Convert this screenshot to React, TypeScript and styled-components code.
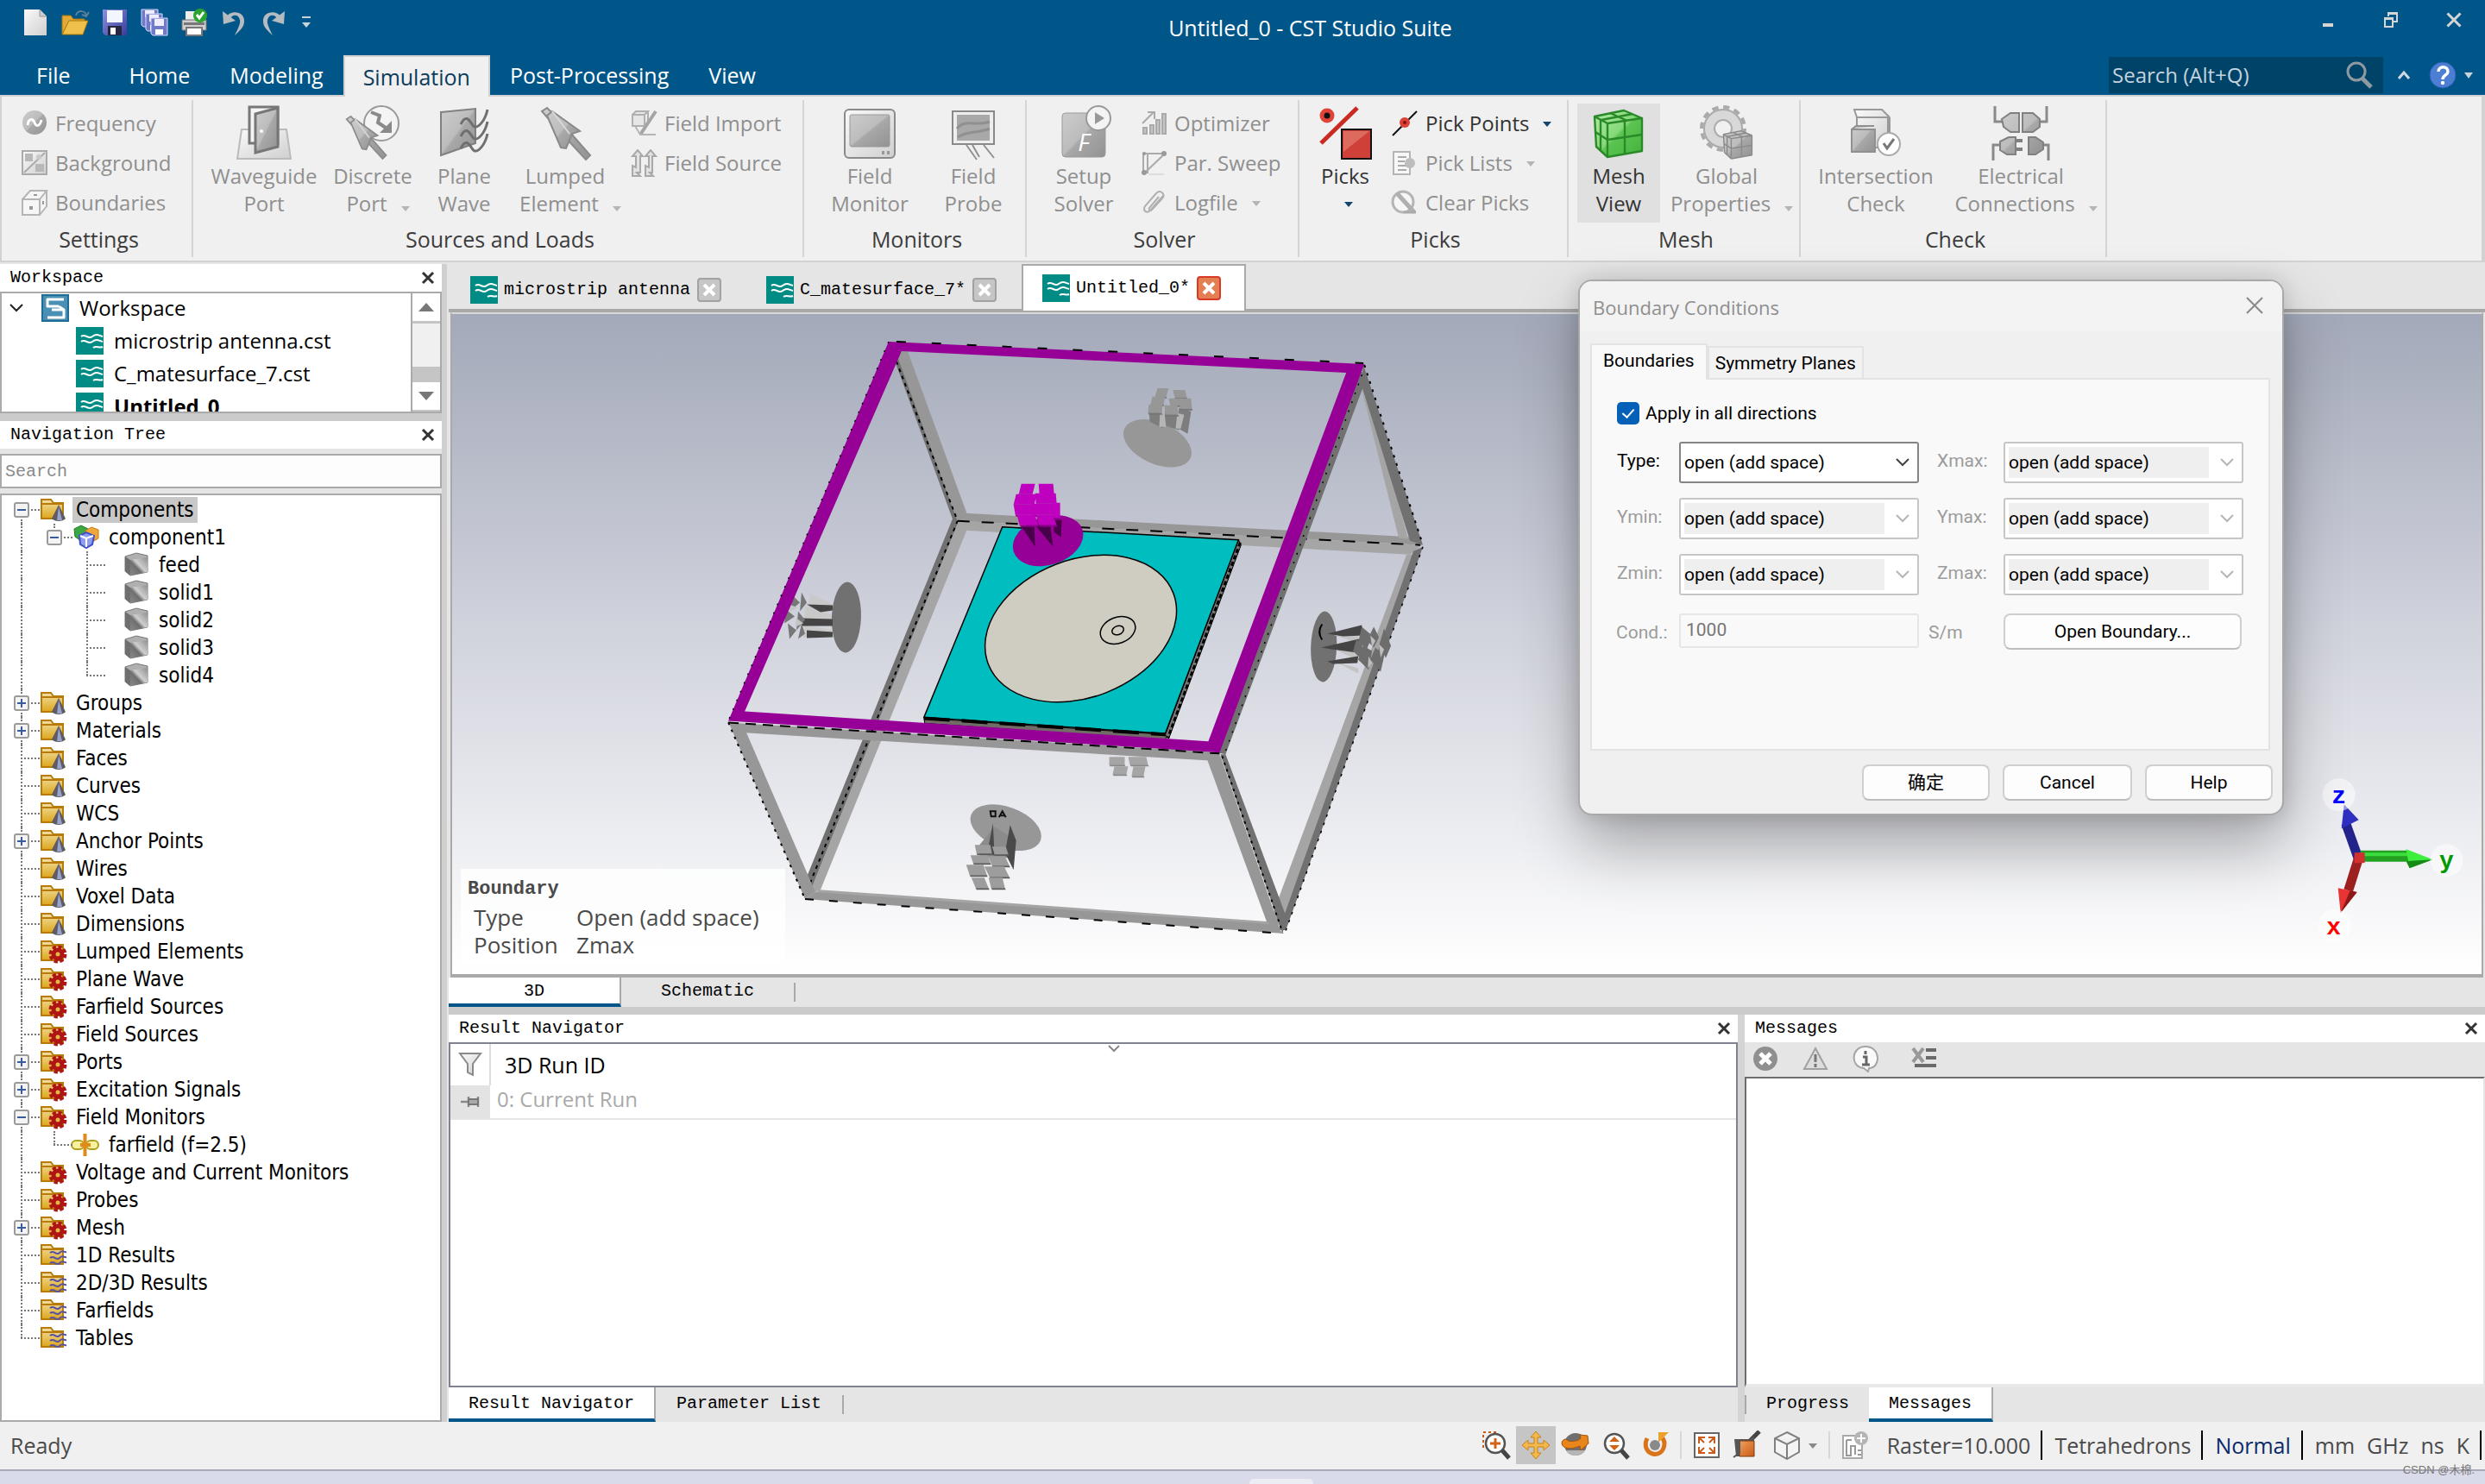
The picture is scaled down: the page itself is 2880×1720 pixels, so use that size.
import React from 'react';
import styled, { createGlobalStyle, css } from 'styled-components';

const ui = '"Open Sans", "Noto Sans", sans-serif';
const mono = '"Liberation Mono", "Noto Sans CJK SC", monospace';
const tahoma = '"DejaVu Sans Condensed", "Open Sans", sans-serif';
const dlg = 'Roboto, "Noto Sans CJK SC", sans-serif';

const Global = createGlobalStyle`
  * { box-sizing: border-box; }
  body { margin: 0; background: #e5e5e5; font: 24px/32px ${ui}; color: #000; }
  button, input, select { font: inherit; color: inherit; margin: 0; padding: 0; border: 0; background: none; border-radius: 0; outline: 0; }
  ul { list-style: none; margin: 0; padding: 0; }
  svg { display: block; flex: none; }
`;

/* ---------- shell ---------- */
const Shell = styled.div`display: flex; flex-direction: column; min-height: 100vh; position: relative; overflow: hidden;`;
const TitleBar = styled.header`display: flex; align-items: center; height: 64px; background: #005688; color: #fff;`;
const QuickAccess = styled.div`display: flex; align-items: center; padding: 0 6px 12px 18px;`;
const QuickButton = styled.button<{ $w?: number }>`width: ${p => p.$w ?? 46}px; display: flex; justify-content: center;`;
const WindowTitle = styled.h1`flex: 1; margin: 0; text-align: center; font-size: 25px; line-height: 32px; font-weight: 400;`;
const WindowButtons = styled.div`display: flex; align-items: center; padding-bottom: 18px; button { width: 73px; display: flex; justify-content: center; }`;
const TabBar = styled.nav`display: flex; height: 46px; background: #005688; color: #fff; padding-left: 19px;`;
const RibbonTab = styled.button<{ $on?: boolean; $gap?: boolean }>`
  && { padding: 0 23px; margin-right: ${p => (p.$gap ? 22 : 0)}px; font-size: 25px;
  ${p => p.$on && css`background: #f0f0f0; color: #0b3c5c; border: 2px solid #d2d2d2; border-bottom: 0; padding: 0 21px; margin-bottom: -2px; z-index: 1;`} }
`;
const TabTools = styled.div`margin-left: auto; display: flex; align-items: center; padding-right: 10px;`;
const SearchBox = styled.label`
  display: flex; align-items: center; width: 318px; height: 42px; background: #004368; padding: 0 12px 0 4px;
  input { flex: 1; min-width: 0; color: #c4d4df; } input::placeholder { color: #c4d4df; opacity: 1; }
`;
const ToolButton = styled.button<{ $w: number }>`width: ${p => p.$w}px; display: flex; justify-content: center;`;

/* ---------- ribbon ---------- */
const Ribbon = styled.div`display: flex; height: 194px; background: #f0f0f0; border: 2px solid #d2d2d2; border-right-width: 4px;`;
const Group = styled.section<{ $w: number }>`
  display: flex; flex-direction: column; width: ${p => p.$w}px; margin: 4px 0; padding-top: 4px; border-right: 2px solid #d5d5d5;
  h2 { margin: 0; padding-left: 5px; font-size: 25px; font-weight: 400; line-height: 38px; text-align: center; color: #3c3c3c; }
`;
const GroupBody = styled.div<{ $pad?: number }>`display: flex; height: 138px; padding-left: ${p => p.$pad ?? 8}px;`;
const Big = styled.button<{ $w: number; $live?: boolean; $on?: boolean }>`
  && { width: ${p => p.$w}px; display: flex; flex-direction: column; align-items: center; padding-bottom: 6px; white-space: nowrap;
  color: ${p => (p.$live ? '#333' : '#8f8f8f')}; background: ${p => (p.$on ? '#e0e0e0' : 'transparent')}; }
  > span { display: flex; height: 32px; align-items: center; }
`;
const BigIcon = styled.i`height: 68px; display: flex; align-items: center;`;
const Smalls = styled.div<{ $ml?: number }>`display: flex; flex-direction: column; margin-left: ${p => p.$ml ?? 0}px;`;
const Small = styled.button<{ $live?: boolean }>`
  && { height: 46px; display: flex; align-items: center; gap: 8px; white-space: nowrap; text-align: left; color: ${p => (p.$live ? '#333' : '#8f8f8f')}; }
`;
const CaretMark = styled.i<{ $c?: string; $big?: boolean }>`
  border: 5px solid transparent; border-top: 6px solid ${p => p.$c ?? '#b5b5b5'}; border-bottom: 0;
  margin: ${p => (p.$big ? '12px -12px 0 16px' : '2px 0 0 8px')};
`;

/* ---------- docking area ---------- */
const Main = styled.main`flex: 1; display: flex; padding-top: 2px; min-height: 0;`;
const LeftDock = styled.aside`width: 518px; display: flex; flex-direction: column; border-right: 6px solid #d0d0d0; background: #e5e5e5;`;
const Center = styled.div`flex: 1; min-width: 0; display: flex; flex-direction: column; padding-left: 2px;`;
const PanelHead = styled.div`
  display: flex; justify-content: space-between; align-items: center; height: 32px; padding: 0 8px 0 12px; background: #fff;
  h2 { margin: 0; font: 400 20px/32px ${mono}; }
`;
const WorkspaceBox = styled.div`display: flex; height: 141px; border: 2px solid #aaa; background: #fff; overflow: hidden; ul { flex: 1; margin-top: -2px; }`;
const WsRow = styled.li<{ $lvl: number; $bold?: boolean }>`
  height: 38px; display: flex; align-items: center; gap: 12px; white-space: nowrap;
  padding-left: ${p => (p.$lvl ? 86 : 8)}px; font-weight: ${p => (p.$bold ? 700 : 400)};
  button { width: 26px; } 
`;
const ScrollBar = styled.div`width: 34px; border-left: 2px solid #aaa; display: flex; flex-direction: column; background: #c5c5c5; gap: 3px;`;
const ScrollPart = styled.button<{ $thumb?: boolean }>`
  && { height: 32px; display: flex; align-items: center; justify-content: center; background: ${p => (p.$thumb ? '#f0f0f0' : '#fff')};
  ${p => p.$thumb && css`height: 50px; margin-bottom: 15px;`} }
`;
const Splitter = styled.div`height: 9px; background: #cbcbcb; flex: none;`;
const TreeSearch = styled.input`
  && { margin: 6px 0; height: 40px; flex: none; border: 2px solid #aaa; background: #fdfdfd; padding: 0 4px; font: 20px ${mono}; }
  &::placeholder { color: #8a8a8a; opacity: 1; }
`;
const Tree = styled.ul`&& { flex: 1; border: 2px solid #aaa; background: #fff; padding-top: 1px; }`;
const TreeRow = styled.li`display: flex; align-items: center; height: 32px; padding-left: 4px; font: 24px/30px ${tahoma}; white-space: nowrap;`;
type G = 'start' | 'tee' | 'end' | 'line' | 'none';
const Guide = styled.span<{ $g: G }>`
  position: relative; width: 38px; height: 32px; flex: none; display: flex; align-items: center; justify-content: center;
  ${p => p.$g !== 'none' && css`&::before { content: ''; position: absolute; left: 18px; border-left: 2px dotted #777;
    top: ${p.$g === 'start' ? 16 : 0}px; bottom: ${p.$g === 'end' ? 16 : 0}px; }`}
  ${p => p.$g !== 'none' && p.$g !== 'line' && css`&::after { content: ''; position: absolute; left: 18px; right: -2px; top: 15px; border-top: 2px dotted #777; }`}
`;
const Expander = styled.button`
  && { position: relative; z-index: 1; width: 18px; height: 18px; border: 2px solid #9a9a9a; border-radius: 3px; background: #f4f4f4; display: grid; place-items: center; }
`;
const TreeIcon = styled.span<{ $w?: number }>`width: ${p => p.$w ?? 40}px; display: flex; justify-content: flex-end; padding-right: 6px; flex: none;`;
const TreeText = styled.span<{ $on?: boolean }>`padding: 0 4px; background: ${p => (p.$on ? '#c8c8c8' : 'transparent')};`;

const DocTabs = styled.div`display: flex; height: 56px; flex: none; border-bottom: 4px solid #a9a9a9; font: 20px/32px ${mono};`;
const DocTab = styled.div<{ $on?: boolean }>`
  display: flex; align-items: center; padding: 8px 27px 0 25px; white-space: nowrap;
  span { margin: 0 8px 0 7px; }
  ${p => p.$on && css`background: #fff; border: 2px solid #a9a9a9; border-bottom: 0; margin: 0 0 -2px 2px; padding: 0 27px 0 22px;`}
`;
const TabClose = styled.button<{ $red?: boolean }>`
  && { width: 28px; height: 28px; display: grid; place-items: center; border-radius: 4px; border: 2px solid ${p => (p.$red ? '#d83a28' : '#a2a2a2')}; background: ${p => (p.$red ? '#e37f52' : '#c6c6c6')}; }
`;
const Viewport = styled.div`
  flex: 1; position: relative; min-height: 0; margin: 0 2px; border: 2px solid #a9a9a9; border-top-color: #d8d8d8; border-bottom-width: 4px;
  background: linear-gradient(#a3a9b9, #d0d2dc 47%, #fff);
  > svg { position: absolute; inset: 0; width: 100%; height: 100%; }
`;
const InfoBox = styled.dl`
  position: absolute; left: 10px; bottom: 12px; width: 376px; margin: 0; padding: 8px 8px 6px 15px; background: rgba(255,255,255,.8); color: #4a4a4a; font-size: 26px;
  display: grid; grid-template-columns: 119px 1fr;
  dt, dd { margin: 0; line-height: 32px; }
  h3 { grid-column: 1 / 3; margin: 0 0 0 -7px; font: 700 22px/32px ${mono}; }
`;
const BottomTabs = styled.div<{ $h: number }>`display: flex; align-items: center; height: ${p => p.$h}px; flex: none; background: #e5e5e5; font: 20px/32px ${mono};`;
const BTab = styled.button<{ $w: number; $on?: boolean }>`
  && { width: ${p => p.$w}px; height: 100%; line-height: 28px; padding-bottom: 2px;
  ${p => p.$on && css`background: #fff; border: solid #a9a9a9; border-width: 0 2px 4px 0; border-bottom-color: #005688; padding: 2px 0 0;`} }
`;
const TabSep = styled.i`width: 2px; height: 22px; background: #a9a9a9;`;
const BottomDock = styled.div`display: flex; height: 472px; gap: 8px; flex: none; background: #d4d4d4;`;
const Panel = styled.section<{ $w?: number }>`display: flex; flex-direction: column; ${p => (p.$w ? css`width: ${p.$w}px; flex: none;` : css`flex: 1; min-width: 0;`)}`;
const ResultBody = styled.div`flex: 1; position: relative; border: 2px solid #80838f; background: #fff; > svg { position: absolute; left: 762px; top: 1px; }`;
const ResultTable = styled.table`
  width: 100%; border-collapse: collapse; 
  th, td { padding: 0; text-align: left; font-weight: 400; border-bottom: 2px solid #e5e5e5; }
  thead th { height: 48px; border-bottom: 0; font-size: 25px; } thead th + th { padding-left: 16px; border-left: 2px solid #ddd; }
  tbody td { height: 38px; color: #a9a9a9; padding: 0 0 6px 8px; } tbody td:first-child { background: #e3e3e3; width: 46px; padding: 0; }
  th:first-child svg, td:first-child svg { margin: auto; }
`;
const MessageTools = styled.div`display: flex; align-items: center; height: 40px; padding: 0 0 3px 8px; gap: 26px; background: #e5e5e5; button:last-child { margin-left: 10px; }`;
const MessageList = styled.div`flex: 1; background: #fff; border: 2px solid #6d6d6d; border-right-color: #e5e5e5; border-bottom: 4px solid #e8e8e8;`;

/* ---------- status bar ---------- */
const Status = styled.footer`display: flex; align-items: center; height: 57px; flex: none; background: #f0f0f0; border-bottom: 2px solid #a9aab8; color: #4a4a4a; padding: 0 4px 2px 12px; white-space: nowrap; font-size: 25px;`;
const StatusIcons = styled.div`display: flex; align-items: center; margin-left: auto;`;
const StatusButton = styled.button<{ $on?: boolean; $w?: number }>`
  && { width: ${p => p.$w ?? 46}px; height: 44px; display: flex; align-items: center; justify-content: center; background: ${p => (p.$on ? '#c5c5c5' : 'transparent')}; }
`;
const ThinSep = styled.i`width: 2px; height: 32px; background: #d8d8d8; margin: 0 6px;`;
const StatusText = styled.span<{ $blue?: boolean }>`padding: 0 12px 0 14px; border-right: 2px solid #000; line-height: 34px; color: ${p => (p.$blue ? '#0a2a6c' : 'inherit')}; display: flex; gap: 14px;`;
const Taskbar = styled.div`height: 15px; flex: none; background: #d9dbea; display: flex; justify-content: center; align-items: flex-end; padding-left: 90px; i { width: 74px; height: 6px; border-radius: 5px 5px 0 0; background: #ececf5; }`;
const Watermark = styled.small`position: absolute; right: 12px; bottom: 6px; font: 13px/20px "Liberation Sans", "Noto Sans CJK SC", sans-serif; color: #777;`;

/* ---------- dialog ---------- */
const Dialog = styled.form`
  position: absolute; right: 233px; top: 324px; width: 818px; border: 2px solid #a9a9a9; border-radius: 16px; background: #f0f0f0; z-index: 5;
  box-shadow: 0 36px 72px rgba(0,0,0,.3), 0 0 24px rgba(0,0,0,.14); font: 21px/28px ${dlg}; padding: 0 14px 15px 12px;
`;
const DialogHead = styled.div`
  display: flex; justify-content: space-between; align-items: center; height: 58px; margin: 0 -14px 14px -12px; padding: 2px 20px 0 15px; background: #f3f3f3; border-radius: 14px 14px 0 0; color: #8f8f8f;
  h2 { margin: 0; font: 400 22px/28px ${ui}; } button { margin-bottom: 4px; }
`;
const DialogTabs = styled.div`display: flex; align-items: flex-end; margin-bottom: -2px;`;
const DialogTab = styled.button<{ $on?: boolean }>`
  && { border: 2px solid #e3e3e3; border-bottom: 0; height: ${p => (p.$on ? 42 : 37)}px; padding: 0 ${p => (p.$on ? 13 : 7)}px; background: ${p => (p.$on ? '#f9f9f9' : '#f2f2f2')};
  ${p => (p.$on ? 'padding-bottom: 4px; position: relative;' : 'margin-bottom: 2px;')} }
`;
const DialogPane = styled.div`height: 432px; border: 2px solid #e3e3e3; background: #f9f9f9; padding: 25px 28px;`;
const CheckLabel = styled.label`display: flex; align-items: center; gap: 7px; margin: 0 0 19px 1px; height: 28px;`;
const Check = styled.input`
  && { appearance: none; width: 26px; height: 26px; border-radius: 5px; display: grid; place-items: center; background: #0560b8; }
  &::after { content: ''; width: 6px; height: 11px; border: solid #fff; border-width: 0 2px 2px 0; transform: rotate(42deg); margin-bottom: 4px; }
`;
const Fields = styled.div`display: grid; grid-template-columns: 73px 278px 98px 278px; row-gap: 17px; align-items: center;`;
const FieldLabel = styled.label<{ $off?: boolean; $right?: boolean }>`color: ${p => (p.$off ? '#9c9c9c' : '#000')}; padding: 0 0 4px ${p => (p.$right ? 21 : 1)}px;`;
const CondLabel = styled(FieldLabel)`padding: 6px 0 0 ${p => (p.$right ? 11 : 0)}px;`;
const SelectBox = styled.span<{ $off?: boolean }>`
  display: flex; align-items: center; height: 48px; border: 2px solid ${p => (p.$off ? '#c6c6c6' : '#858585')}; border-radius: 3px; background: #fff; padding: 4px 8px 4px 4px;
  select { flex: 1; min-width: 0; height: 100%; appearance: none; opacity: 1; color: #000; background: ${p => (p.$off ? '#efefef' : '#fff')}; margin-right: 12px; }
`;
const CondInput = styled.input`&& { height: 40px; width: 278px; border: 2px solid #e6e6e6; border-radius: 3px; background: #f9f9f9; padding: 0 6px 2px; color: #767676; margin-top: 2px; }`;
const DlgButton = styled.button<{ $w: number; $drop?: boolean }>`
  && { width: ${p => p.$w}px; height: 42px; margin-top: ${p => (p.$drop ? 4 : 0)}px; border: 2px solid #cfcfcf; border-bottom-color: #bdbdbd; border-radius: 8px; background: #fdfdfd; color: #000; }
`;
const DialogFoot = styled.div`display: flex; justify-content: flex-end; gap: 15px; padding-top: 16px; margin-right: -3px;`;

/* ---------- icons ---------- */
type Kids = { children?: React.ReactNode; w?: number; h?: number; vb?: string };
const Ico = ({ children, w = 32, h = 32, vb }: Kids) => (
  <svg width={w} height={h} viewBox={vb ?? `0 0 ${w} ${h}`} fill="none" aria-hidden="true">{children}</svg>
);
const DefsSvg = styled.svg`position: absolute;`;
const Defs = () => (
  <DefsSvg width="0" height="0" aria-hidden="true">
    <defs>
      <linearGradient id="gy" x2="1" y2="1"><stop stopColor="#cccccc" /><stop offset=".48" stopColor="#bcbcbc" /><stop offset=".52" stopColor="#a8a8a8" /><stop offset="1" stopColor="#929292" /></linearGradient>
      <linearGradient id="gl" x2="1" y2="1"><stop stopColor="#fafafa" /><stop offset="1" stopColor="#cfcfcf" /></linearGradient>
      <linearGradient id="fo" x2="0" y2="1"><stop stopColor="#f2dfa4" /><stop offset="1" stopColor="#dca61c" /></linearGradient>
      <linearGradient id="bl" x2="1" y2="1"><stop stopColor="#8b92dd" /><stop offset="1" stopColor="#3b3b9c" /></linearGradient>
      <linearGradient id="gn" x2="1" y2="1"><stop stopColor="#b4ecaa" /><stop offset=".48" stopColor="#84d878" /><stop offset=".52" stopColor="#5cc452" /><stop offset="1" stopColor="#44b23c" /></linearGradient>
      <linearGradient id="og" x2="1" y2="1"><stop stopColor="#f0a060" /><stop offset="1" stopColor="#c85a14" /></linearGradient>
      <linearGradient id="ok" x1="0" y1="1" x2="1" y2="0"><stop stopColor="#8a8a8a" /><stop offset=".4" stopColor="#6f6f6f" /><stop offset=".55" stopColor="#cfcfcf" /><stop offset="1" stopColor="#8d8d8d" /></linearGradient>
    </defs>
  </DefsSvg>
);
const X = ({ s = 16, c = '#333', t = 3 }) => <Ico w={s} h={s} vb="0 0 16 16"><path d="M2 2l12 12M14 2L2 14" stroke={c} strokeWidth={t} /></Ico>;
const Chev = ({ c = '#555' }) => <Ico w={18} h={12} vb="0 0 18 12"><path d="M2 2l7 7 7-7" stroke={c} strokeWidth="2" /></Ico>;

const IcoNew = () => <Ico><path d="M3 1h18l8 8v22H3z" fill="url(#gl)" /><path d="M21 1v8h8" fill="#ccc" stroke="#999" /></Ico>;
const IcoOpen = () => <Ico w={34}><path d="M2 29V8h10l3 4h13v5" fill="#e0a93a" stroke="#a87408" /><path d="M2 30l8-16h22l-6 16z" fill="#f0c14a" stroke="#a87408" /><path d="M18 8c2-7 11-6 12 0m3-4l-3 5-5-2" stroke="#5d7f98" strokeWidth="2" /></Ico>;
const IcoSave = () => <Ico><path d="M2 1h28v30H5l-3-3z" fill="url(#bl)" /><path d="M7 2h18v14H7z" fill="#f4f6ff" /><path d="M8 20h16v11H8z" fill="#26263f" /><path d="M11 22h6v8h-6z" fill="#fff" /></Ico>;
const IcoSaveAll = () => <Ico>{[[0, 0], [5, 5], [11, 10]].map(([x, y]) => <g key={x} transform={`translate(${x} ${y})`}><path d="M1 1h19v20H3l-2-2z" fill="#7078c8" stroke="#d7dbff" /><path d="M5 2h11v8H5z" fill="#eef" /><path d="M6 14h9v6H6z" fill="#fff" /></g>)}</Ico>;
const IcoPrint = () => <Ico><path d="M6 3h15v11H6z" fill="#eee" /><path d="M2 13h28v12H2z" fill="#cfcfcf" stroke="#777" /><path d="M4 16h24v3H4z" fill="#777" /><path d="M7 22h18v9H7z" fill="#fff" stroke="#777" strokeWidth="2" /><circle cx="23" cy="8" r="8" fill="#2aa32f" /><path d="M19 7l3 4 5-7" stroke="#fff" strokeWidth="3" /></Ico>;
const IcoUndo = ({ flip = false }) => <Ico><g transform={flip ? 'translate(32 0) scale(-1 1)' : undefined}><path d="M6 12C11 0 29 3 28 15c0 7-6 11-11 16 4-8 7-14 6-18-2-8-10-6-12 0z" fill="#b4bbc1" /><path d="M3 3l1 15 14-4z" fill="#b4bbc1" /></g></Ico>;

const IcoFreq = () => <Ico><circle cx="16" cy="15" r="14" fill="url(#gy)" /><path d="M8 18c1-8 6-8 8-3s6 5 8-3" stroke="#fff" strokeWidth="3" /></Ico>;
const IcoBg = () => <Ico><path d="M2 2h28v27H2z" fill="url(#gl)" stroke="#aaa" strokeWidth="2" /><path d="M5 5h9v9H5zM17 17h10v9H17z" fill="#b8b8b8" /><path d="M4 27L28 4" stroke="#aaa" strokeWidth="2" /><circle cx="21" cy="9" r="3" fill="#c9c9c9" /></Ico>;
const IcoBound = () => <Ico><path d="M2 12h20v18H2zM2 12L11 2h19l-8 10M30 2v18l-8 10" fill="#f6f6f6" stroke="#b5b5b5" strokeWidth="2" /><path d="M10 20h4v4h-4zM15 6h4v2h-4zM25 14h2v4h-2z" fill="#999" /></Ico>;
const IcoFieldImp = () => <Ico><path d="M3 6h14v13H3zM3 6l4-4h14l-4 4M21 2v12l-4 5" fill="#e6e6e6" stroke="#b0b0b0" strokeWidth="2" /><path d="M30 2L18 20l-6 9" stroke="#a5a5a5" strokeWidth="4" /><path d="M6 19l6 10h18" stroke="#b5b5b5" strokeWidth="2" /></Ico>;
const IcoFieldSrc = () => <Ico><path d="M12 27V8h3L9 1 3 8h4v13l-4-2v12h9l-4-4zM26 27V8h4l-6-7-6 7h4v13l-4-2v12h9l-4-4z" fill="#e2e2e2" stroke="#a9a9a9" strokeWidth="2" /></Ico>;
const IcoOpt = () => <Ico><path d="M4 28h4v-7H4zM12 28h4V18h-4zM19 28h4V12h-4zM26 28h4V5h-4z" fill="#c4c4c4" stroke="#aaa" strokeWidth="2" /><path d="M3 16L16 3m-7 0h8v8" stroke="#aaa" strokeWidth="2" /></Ico>;
const IcoSweep = () => <Ico><path d="M4 28V5h25L5 28M9 5v23" stroke="#aaa" strokeWidth="2" /><circle cx="28" cy="5" r="3" fill="#999" /><circle cx="5" cy="5" r="2" fill="#999" /><circle cx="5" cy="27" r="3" fill="#999" /><path d="M10 29h18" stroke="#ddd" strokeWidth="2" /></Ico>;
const IcoClip = () => <Ico><path d="M27 8L12 25c-4 4-9 0-6-5L19 5c5-5 11 1 7 6L14 24c-2 2-4 0-3-2L22 9" stroke="#b0b0b0" strokeWidth="2" /></Ico>;
const IcoPickPt = () => <Ico><path d="M2 30L30 2" stroke="#111" strokeWidth="2" /><circle cx="16" cy="15" r="6" fill="#dc4136" /><circle cx="16" cy="15" r="2" fill="#801510" /></Ico>;
const IcoPickList = () => <Ico><path d="M3 3h19v26H3z" fill="#f7f7f7" stroke="#b5b5b5" strokeWidth="2" /><path d="M8 9h10M8 14h8M8 19h10M8 24h10" stroke="#aaa" strokeWidth="2" /><circle cx="22" cy="16" r="6" fill="#bdbdbd" /></Ico>;
const IcoClear = () => <Ico><circle cx="14" cy="15" r="12" fill="#f6f6f6" stroke="#b5b5b5" strokeWidth="3" /><path d="M7 5l20 22" stroke="#b0b0b0" strokeWidth="5" /><path d="M15 27h14" stroke="#aaa" strokeWidth="3" /></Ico>;

const Cursor = ({ x = 0, y = 0 }) => <g transform={`translate(${x} ${y})`} fill="url(#gy)" stroke="#8a8a8a" strokeWidth="2"><path d="M30 36l6-5 22 25-5 5zM9 13l-7-8 6-4 8 8z" /><path d="M8 10l6-5 32 23-9 3-7 17-6-1z" /><path d="M14 5l20 26" stroke="#d8d8d8" /></g>;
const IcoWave = () => <Ico w={64} h={64}><path d="M6 28h52l5 34H1z" fill="url(#gl)" stroke="#bbb" strokeWidth="2" /><path d="M15 2h33v42H15z" fill="#f4f4f4" stroke="#777" strokeWidth="3" /><path d="M22 10l26-7v45l-26 7z" fill="url(#gy)" stroke="#777" strokeWidth="3" /><circle cx="29" cy="30" r="2" fill="#fff" /></Ico>;
const IcoDisc = () => <Ico w={64} h={64}><circle cx="42" cy="21" r="20" fill="#f4f4f4" stroke="#999" strokeWidth="2" /><path d="M30 8l10 4-2 8 12 8" stroke="#8a8a8a" strokeWidth="4" /><path d="M54 18v14H40z" fill="#8a8a8a" /><g transform="translate(0 12) scale(.82)"><Cursor /></g></Ico>;
const IcoPlane = () => <Ico w={64} h={64}><path d="M5 8l40-4v40L5 58z" fill="url(#gy)" stroke="#808080" strokeWidth="2" />{[0, 14, 28].map(d => <path key={d} transform={`translate(0 ${d})`} d="M28 22c8-16 12 2 16 3s12-6 15-20" stroke="#6f6f6f" strokeWidth="3" />)}</Ico>;
const IcoLumped = () => <Ico w={64} h={64}><Cursor x={3} y={2} /></Ico>;
const IcoMonitor = () => <Ico w={64} h={64}><rect x="3" y="5" width="58" height="56" rx="5" fill="url(#gl)" stroke="#8a8a8a" strokeWidth="2" /><rect x="9" y="11" width="46" height="37" rx="2" fill="url(#gy)" stroke="#999" /><path d="M46 53h3v4h-3zM52 53h3v4h-3z" fill="#999" /></Ico>;
const IcoProbe = () => <Ico w={64} h={64}><rect x="8" y="7" width="48" height="38" fill="#eee" stroke="#8a8a8a" strokeWidth="2" /><path d="M13 11h38v30H13z" fill="#a8a8a8" /><path d="M13 27c10-12 22-2 38-8M14 37c12-8 22-4 37-10" stroke="#909090" strokeWidth="3" /><path d="M24 46l12 17M44 46l12 15M31 46l8 14" stroke="#909090" strokeWidth="2" /></Ico>;
const IcoSolver = () => <Ico w={64} h={64}><rect x="7" y="9" width="50" height="51" rx="4" fill="url(#gy)" stroke="#999" /><text x="32" y="53" fontFamily="Open Sans" fontSize="28" textAnchor="middle" fill="#fff">F</text><circle cx="49" cy="15" r="14" fill="#f4f4f4" stroke="#999" strokeWidth="2" /><path d="M45 8l11 7-11 7z" fill="#999" /></Ico>;
const IcoPicks = () => <Ico w={64} h={64}><path d="M4 44L46 3" stroke="#c92b22" strokeWidth="5" /><circle cx="11" cy="12" r="6" fill="#111" stroke="#e04438" strokeWidth="5" /><path d="M28 28h34v34H28z" fill="#cf4138" stroke="#111" strokeWidth="2" /><path d="M30 30h30L30 54z" fill="#dc6a5e" /></Ico>;
const Cube = ({ fill = 'url(#gn)', line = '#2a8a28' }) => <g fill={fill} stroke={line} strokeWidth="2.4" strokeLinejoin="round"><path d="M4 13l15 8v39L6 48zM19 21l40-6v38l-40 7zM4 13l34-7 21 9-40 6z" /><path d="M5 31l14 9 40-6M39 18v39M11 16v37M22 9l20 9M12 17l36-7" fill="none" /></g>;
const IcoMesh = () => <Ico w={64} h={64}><Cube /></Ico>;
const IcoGlobal = () => <Ico w={64} h={64}><circle cx="28" cy="27" r="24" stroke="#aaa" strokeWidth="6" strokeDasharray="7 5.5" /><circle cx="28" cy="27" r="17" fill="none" stroke="#d8d8d8" strokeWidth="12" /><circle cx="28" cy="27" r="22" stroke="#aaa" strokeWidth="2" /><circle cx="28" cy="27" r="10" fill="#f0f0f0" stroke="#aaa" strokeWidth="2" /><g transform="translate(26 26) scale(.6)"><Cube fill="url(#gy)" line="#8a8a8a" /></g></Ico>;
const IcoInter = () => <Ico w={64} h={64}><path d="M10 14v35h36V14zM10 14L7 5h32l9 9M48 14v35" fill="url(#gl)" stroke="#999" strokeWidth="2" /><path d="M4 28h27v26H4zM4 28l5-4h21" fill="url(#gy)" stroke="#909090" strokeWidth="2" /><circle cx="47" cy="45" r="13" fill="#fff" stroke="#aaa" strokeWidth="2" /><path d="M41 44l4 6 8-11" stroke="#777" strokeWidth="3" /></Ico>;
const IcoElec = () => <Ico w={68} h={64}><path d="M4 1v18h10M64 1v18H54M2 64V46h8M66 64V46h-6" stroke="#8a8a8a" strokeWidth="3" /><path d="M12 16l10-7h10v22H22l-8-6zM36 9h12l8 7v9l-8 6H36zM10 42l10-5h8v20H18l-8-5zM43 37h8l9 6v8l-9 6h-8z" fill="url(#gy)" stroke="#808080" strokeWidth="2" /><path d="M28 41h8M28 51h8" stroke="#808080" strokeWidth="4" /></Ico>;

const Sigma = () => <Ico><path d="M0 0h32v32H0z" fill="#4b8fb5" /><path d="M1 1h30v30H1z" stroke="#1f6d97" strokeWidth="2" /><path d="M26 6H7v8h13M12 18h14v9H7" stroke="#fff" strokeWidth="3" strokeLinejoin="round" /><path d="M20 14l6 4" stroke="#fff" strokeWidth="3" /></Ico>;
const Cst = () => <Ico><path d="M0 0h32v32H0z" fill="#008b84" /><path d="M6 11c5-4 8 4 13 0s8-1 12 0M6 17c5-4 8 4 13 0s8-1 12 0M20 24c4-3 7 1 11-1" stroke="#fff" strokeWidth="2" /></Ico>;
const Folder = ({ k }: { k: 'cone' | 'gear' | 'res' }) => (
  <Ico w={32} h={30}>
    <path d="M2 25V3h11l3 4h11v18z" fill="url(#fo)" stroke="#b87a08" strokeWidth="2" /><path d="M3 8h24" stroke="#b87a08" strokeWidth="2" />
    {k === 'cone' && <><path d="M22 9l8 16c-3 4-13 4-16 0z" fill="#5c5c62" /><path d="M22 11l4 16h-6z" fill="#9ba2cc" /></>}
    {k === 'gear' && <><circle cx="21" cy="18" r="8" stroke="#b01515" strokeWidth="5" strokeDasharray="4 2.3" /><circle cx="21" cy="18" r="5" stroke="#b01515" strokeWidth="5" /></>}
    {k === 'res' && [0, 6, 12].map(d => <path key={d} d={`M12 ${12 + d}c5-4 7 4 11 0s5 0 8-1`} stroke="#5751a0" strokeWidth="2" />)}
  </Ico>
);
const Comp = () => <Ico w={32} h={30}><path d="M2 5l8-4 8 4v10l-8 4-7-5z" fill="#3da843" stroke="#1c7a25" /><path d="M15 7l7-4 8 3v10l-7 4-8-4z" fill="#f0a83a" stroke="#c77a10" /><path d="M8 13l8-4 9 4-2 10-7 4-7-4z" fill="#8f9cf0" stroke="#3f50c8" strokeWidth="2" /><path d="M16 26V16l-7-3 7 3 8-3" stroke="#fff" strokeWidth="2" /></Ico>;
const Solid = () => <Ico w={32} h={30}><path d="M3 5l13-4 13 3v19L9 27l-6-5z" fill="#b0b0b0" stroke="#777" /><path d="M9 9l20-3v17L9 27z" fill="url(#ok)" /><path d="M3 5l6 4v18l-6-5z" fill="#6f6f6f" /></Ico>;
const Far = () => <Ico w={34} h={28}><rect x="1" y="9" width="14" height="10" rx="5" fill="#f6f0a0" stroke="#b0a020" strokeWidth="2" /><rect x="18" y="9" width="14" height="10" rx="5" fill="#f6f0a0" stroke="#b0a020" strokeWidth="2" /><path d="M16.5 1v26M11 14h12" stroke="#e08a1a" strokeWidth="4" /></Ico>;

const Lens = ({ k }: { k: 'plus' | 'ud' }) => <Ico w={34} h={34}>{k === 'plus' && <path d="M2 20V2h16" stroke="#c85a14" strokeWidth="2" strokeDasharray="3 3" />}<circle cx="16" cy="15" r="11" fill="#fff" stroke="#555" strokeWidth="2.5" /><path d="M24 23l8 9" stroke="#444" strokeWidth="5" />{k === 'plus' ? <path d="M10 15h12M16 9v12" stroke="#d26416" strokeWidth="3" /> : <path d="M16 7l6 6H10zM16 23l6-6H10z" fill="#d26416" />}</Ico>;
const Pan = () => <Ico w={34} h={34}><path d="M17 1l6 7h-4v7h7v-4l7 6-7 6v-4h-7v7h4l-6 7-6-7h4v-7H8v4l-7-6 7-6v4h7V8h-4z" fill="#f5b84c" stroke="#c88314" /></Ico>;
const Rot = () => <Ico w={34} h={34}><circle cx="17" cy="16" r="13" fill="#6f6f6f" /><path d="M6 23h22c-3 8-19 8-22 0z" fill="#b5b5b5" /><path d="M1 15c1 7 12 7 21 3l1 5 9-8-1-9-9-1 1 4c-4 4-14 5-17 1-3 0-5 2-5 5z" fill="#e8861c" stroke="#a4530c" /></Ico>;
const Reset = () => <Ico w={34} h={34}><path d="M8 9c-9 19 19 27 20 6 0-4-1-5-3-7" stroke="#d9741a" strokeWidth="5" /><path d="M21 14V2h12z" fill="#eba22a" /><circle cx="17" cy="17" r="6" fill="#8a8a8a" /></Ico>;
const Fit = () => <Ico><path d="M2 2h28v28H2z" fill="#fff" stroke="#666" strokeWidth="2" /><path d="M7 14V7h7M18 7h7v7M25 18v7h-7M14 25H7v-7M8 8l5 5M24 8l-5 5M24 24l-5-5M8 24l5-5" stroke="#cc5a18" strokeWidth="2" /></Ico>;
const Cut = () => <Ico w={34} h={34}><path d="M21 12L32 1" stroke="#444" strokeWidth="5" /><path d="M3 10h18l5-4v20l-4 4H5z" fill="#555" /><path d="M9 12h17v18H9z" fill="url(#og)" stroke="#7b3a10" /><path d="M2 31l7-5V12" stroke="#555" strokeWidth="2" /></Ico>;
const Box3 = () => <Ico w={34} h={34}><path d="M17 2l14 7v16l-14 8-14-8V9zM3 9l14 7 14-7M17 16v17" fill="#f4f4f4" stroke="#808080" strokeWidth="2" /></Ico>;
const Prop = () => <Ico w={34} h={34}><path d="M3 6h22v26H3z" fill="#fff" stroke="#aaa" strokeWidth="2" /><path d="M7 11v18h5V18h5v10M20 23h4M20 28h4M7 11h6" stroke="#999" strokeWidth="2" /><circle cx="24" cy="9" r="8" fill="#b5b5b5" /><path d="M19 9h10M24 4v10" stroke="#fff" strokeWidth="2" /></Ico>;

/* ---------- 3D scene ---------- */
const Dash = ({ d, w = 2, a = '6 6' }: { d: string; w?: number; a?: string }) => <path d={d} stroke="#000" strokeWidth={w} strokeDasharray={a} fill="none" />;
const Blocks = ({ list, c, dk }: { list: number[][]; c: string; dk: string }) => (
  <>{list.map(([x, y, w, h, s], i) => (
    <g key={i}><path d={`M${x} ${y}h${w}l${s} ${h}h${-w}z`} fill={c} /><path d={`M${x + s} ${y + h}h${w}l1 2h${-w}z`} fill={dk} /></g>
  ))}</>
);
const L = '#979797', LL = '#a5a5a5', D = '#717171', P = '#960096';
const Scene = () => (
  <svg viewBox="526 365 2352 766" preserveAspectRatio="xMidYMid meet" role="img" aria-label="3D model view">
    <path fill={L} d="M1119 596L1645 624 1650 633 1111 605z" />
    <path fill={LL} d="M1111 605L1650 633 1636 644 1119 616z" />
    <path fill={D} d="M1034 408L1106 605 1111 605 1040 410z" />
    <path fill={L} d="M1039 408L1053 408 1122 597 1111 605z" />
    <path fill={D} d="M1105 603L1112 606 940 1036 932 1028z" />
    <path fill={LL} d="M1112 606L1122 615 952 1033 938 1040z" />
    <path fill={LL} d="M1577 440L1583 440 1634 626 1623 625z" />
    <path fill={D} d="M1582 424L1651 633 1636 628 1579 445z" />
    <Dash d="M1040 420L1111 605 938 1030" a="4 5" />
    <Dash d="M1111 605L1648 633" a="14 14" />
    <Dash d="M1583 424L1651 633" a="3 7" />
    <g>
      <ellipse cx="1343" cy="515" rx="42" ry="24" transform="rotate(24 1343 515)" fill={L} />
      <path d="M1333 472h13l4 26-16-8zM1352 474h12l4 26-18-6zM1368 474l14 4-4 26-14-8z" fill="#7d7d7d" />
      <path d="M1346 478h5l2 18h-8zM1366 480l8 2-4 16h-6z" fill="#b5b5b5" />
      <Blocks c={L} dk="#777" list={[[1343, 451, 13, 10, -3], [1361, 453, 14, 9, 2], [1337, 461, 15, 9, -2], [1356, 463, 16, 8, 2], [1333, 470, 16, 10, -1], [1351, 471, 15, 11, 1], [1368, 463, 14, 12, 1]]} />
    </g>
    <path fill="#716c66" d="M1072 834L1352 853 1354 860 1073 840z" stroke="#000" />
    <path fill="#777" d="M1437 627L1440 633 1356 858 1352 853z" stroke="#000" />
    <path fill="#00bdbf" stroke="#000" strokeWidth="1.5" d="M1163 612L1437 627 1352 852 1072 833z" />
    <ellipse cx="1254" cy="730" rx="115" ry="80" transform="rotate(-21 1254 730)" fill="#cfcdc2" stroke="#000" strokeWidth="1.5" />
    <ellipse cx="1297" cy="732" rx="21" ry="15" transform="rotate(-21 1297 732)" fill="none" stroke="#000" strokeWidth="1.5" />
    <ellipse cx="1297" cy="732" rx="7" ry="5" transform="rotate(-21 1297 732)" fill="none" stroke="#000" strokeWidth="1.5" />
    <Dash d="M1072 834L1352 853" w={4} a="30 14" />
    <Dash d="M1439 630L1355 857" w={3} a="5 3" />

    <ellipse cx="1216" cy="628" rx="42" ry="28" transform="rotate(-18 1216 628)" fill={P} />
    <path d="M1184 610l16 0 1 25zM1202 611l16-4 4 28zM1222 600l10 4-1 20-8-6z" fill="#480048" />
    <Blocks c="#bf00bf" dk="#8a008a" list={[[1185, 562, 16, 12, -3], [1205, 562, 17, 12, 1], [1179, 574, 24, 12, -3], [1201, 573, 24, 12, 1], [1176, 586, 24, 12, 2], [1196, 585, 28, 13, 2], [1180, 598, 21, 12, 3], [1202, 598, 20, 12, 4], [1222, 584, 8, 18, 0]]} />

    <ellipse cx="982" cy="717" rx="17" ry="41" transform="rotate(2 982 717)" fill={D} />
    <path d="M940 689l26 13v8l-28-2zM934 704l31 10v6l-32 2zM934 726l32 6v6l-34 2z" fill="#c9c9c9" />
    <path d="M936 702l30 1v6l-14 2zM930 718l36 1v8l-36 0zM936 732l30 2v6l-30 1z" fill="#454545" />
    <path d="M920 692l8 8-12 10zM930 688l6 12-8 10zM912 708l10 8-12 8zM926 710l8 10-10 12zM914 724l10 8-8 10zM930 724l4 12-8 6z" fill="#777" />
    <path d="M916 702l10 4-10 4zM924 718l8 6-9 4z" fill="#c4c4c4" />

    <path fill={L} d="M845 839L1415 874 1416 884 864 851z" />
    <path fill={L} d="M845 838L866 851 946 1036 934 1044z" />
    <path fill={LL} d="M951 1033L1470 1070 1474 1075 946 1037z" />
    <path fill={L} d="M946 1036L1474 1073 1490 1084 934 1044z" />
    <path fill={LL} d="M1643 644L1632 644 1475 1066 1488 1078z" />
    <path fill={D} d="M1651 635L1640 640 1484 1080 1492 1080z" />
    <path fill={L} d="M1401 883L1416 878 1487 1084 1470 1071z" />
    <path fill={D} d="M1416 876L1422 876 1493 1066 1488 1084z" />
    <path fill={D} d="M1578 430L1586 438 1422 876 1412 874z" />
    <path fillRule="evenodd" fill={P} d="M1031 397L1583 423 1415 874 845 837zM1046 408L864 826 1402 861 1562 433z" />
    <Dash d="M1040 397L1582 422" a="11 30" />
    <Dash d="M845 839L1415 875" a="12 8" />
    <Dash d="M1031 397L845 837M1584 425L1421 875" a="2 9" w={1.5} />
    <Dash d="M845 839L934 1044" a="3 6" />
    <Dash d="M934 1044L1490 1084" a="10 18" />
    <Dash d="M1418 878L1488 1082" a="3 5" />
    <Dash d="M1651 635L1491 1083" a="3 7" w={1.5} />

    <ellipse cx="1536" cy="751" rx="15" ry="41" transform="rotate(2 1536 751)" fill={D} />
    <path d="M1534 725c-4 6-4 12 0 18" stroke="#000" strokeWidth="2" fill="none" />
    <path d="M1546 737l30 2v8zM1544 752l34 6v10zM1548 768l28 8v6z" fill="#c4c4c4" />
    <path d="M1540 736l40-10 2 12-24 1zM1533 752l44-10-2 16-30-4zM1540 768l36-6-1 8-28 1z" fill="#454545" />
    <path d="M1580 728l12 10-6 16-10-8zM1594 728l6 12-6 12-8-8zM1606 730l8 20-6 14-8-14zM1582 750l10 6-4 22-12-12zM1596 752l10 10-4 18-12-14zM1574 742l8 10-4 12-8-8z" fill="#6d6d6d" />
    <path d="M1590 738l6 6-4 8zM1600 748l6 6-4 10zM1588 762l4 8-5 6z" fill="#bdbdbd" />

    <Blocks c={LL} dk="#888" list={[[1287, 879, 18, 9, 0], [1309, 879, 21, 9, 2], [1293, 890, 16, 9, -2], [1315, 890, 14, 11, -2]]} />
    <ellipse cx="1167" cy="961" rx="43" ry="24" transform="rotate(20 1167 961)" fill={L} />
    <path d="M1149 942h6v6h-5zM1159 949l4-7 4 7M1160 947h6" stroke="#111" strokeWidth="2" fill="none" />
    <path d="M1134 984l20-24 22 14-2 22h-36z" fill="#8b8b8b" />
    <path d="M1152 956l2 38-8-6zM1172 958l7 18-3 34-10-20z" fill="#4a4a4a" />
    <Blocks c="#9d9d9d" dk="#5c5c5c" list={[[1131, 981, 18, 10, 2], [1151, 983, 16, 9, 3], [1126, 993, 20, 9, 3], [1146, 994, 20, 11, 5], [1121, 1004, 20, 12, 4], [1142, 1006, 23, 12, 6], [1127, 1019, 15, 12, 5], [1147, 1019, 16, 12, 3]]} />

    <g transform="translate(3 0)">
      <path d="M2734 998L2719 956" stroke="#23238c" strokeWidth="11" />
      <path d="M2717 934L2734 952 2714 962z" fill="#3030c0" />
      <path d="M2736 994h56" stroke="#22a022" strokeWidth="13" />
      <path d="M2736 992h56" stroke="#3ddc3d" strokeWidth="4" />
      <path d="M2820 998L2789 986 2793 1008z" fill="#3dee3d" /><path d="M2820 998L2789 1000 2793 1008z" fill="#178a17" />
      <path d="M2734 996L2722 1034" stroke="#9c2020" strokeWidth="11" />
      <path d="M2713 1060L2710 1031 2732 1036z" fill="#e83434" /><path d="M2713 1060L2724 1034 2732 1036z" fill="#8c1818" />
      <path d="M2729 990h12v12h-12z" fill="#d03030" />
      <g fill="#fff" fillOpacity=".5"><circle cx="2711" cy="923" r="19" /><circle cx="2836" cy="999" r="19" /><circle cx="2706" cy="1075" r="19" /></g>
      <g fontFamily="Liberation Mono, monospace" fontWeight="700" fontSize="28" textAnchor="middle">
        <text x="2711" y="933" fill="#0000ff">z</text><text x="2836" y="1008" fill="#009a00">y</text><text x="2705" y="1085" fill="#f00">x</text>
      </g>
    </g>
  </svg>
);

/* ---------- data ---------- */
type Row = [string, G[], React.ReactNode, string?];
const rows: Row[] = [
  ['Components', ['start'], <Folder k="cone" />, '-'],
  ['component1', ['line', 'end'], <Comp />, '-'],
  ...['feed', 'solid1', 'solid2', 'solid3', 'solid4'].map((n, i): Row => [n, ['line', 'none', i === 4 ? 'end' : 'tee'], <Solid />]),
  ...([['Groups', '+'], ['Materials', '+'], ['Faces'], ['Curves'], ['WCS'], ['Anchor Points', '+'], ['Wires'], ['Voxel Data'], ['Dimensions']] as string[][])
    .map(([n, e]): Row => [n, ['tee'], <Folder k="cone" />, e]),
  ...([['Lumped Elements'], ['Plane Wave'], ['Farfield Sources'], ['Field Sources'], ['Ports', '+'], ['Excitation Signals', '+'], ['Field Monitors', '-']] as string[][])
    .map(([n, e]): Row => [n, ['tee'], <Folder k="gear" />, e]),
  ['farfield (f=2.5)', ['line', 'end'], <Far />],
  ...([['Voltage and Current Monitors'], ['Probes'], ['Mesh', '+']] as string[][]).map(([n, e]): Row => [n, ['tee'], <Folder k="gear" />, e]),
  ...['1D Results', '2D/3D Results', 'Farfields', 'Tables'].map((n, i): Row => [n, [i === 3 ? 'end' : 'tee'], <Folder k="res" />]),
];

const BigBtn = ({ w, icon, a, b, caret, live, on, cc }: { w: number; icon: React.ReactNode; a: string; b?: string; caret?: boolean; live?: boolean; on?: boolean; cc?: string }) => (
  <Big type="button" $w={w} $live={live} $on={on}><BigIcon>{icon}</BigIcon><span>{a}</span><span>{b}{caret && <CaretMark $big={!!b} $c={cc} />}</span></Big>
);
const SmallBtn = ({ icon, t, caret, live }: { icon: React.ReactNode; t: string; caret?: boolean; live?: boolean }) => (
  <Small type="button" $live={live}>{icon}{t}{caret && <CaretMark $c={live ? '#12466e' : undefined} />}</Small>
);
const Drop = ({ id, label, off, right }: { id: string; label: string; off?: boolean; right?: boolean }) => (
  <>
    <FieldLabel htmlFor={id} $off={off} $right={right}>{label}</FieldLabel>
    <SelectBox $off={off}><select id={id} disabled={off}><option>open (add space)</option></select><Chev c={off ? '#b5b5b5' : '#444'} /></SelectBox>
  </>
);
const Head = ({ t }: { t: string }) => <PanelHead><h2>{t}</h2><button type="button" aria-label={`Close ${t}`}><X /></button></PanelHead>;

export default function App() {
  return (
    <Shell>
      <Global />
      <Defs />
      <TitleBar>
        <QuickAccess>
          {([['New', <IcoNew />], ['Open', <IcoOpen />], ['Save', <IcoSave />], ['Save all', <IcoSaveAll />], ['Print', <IcoPrint />], ['Undo', <IcoUndo />], ['Redo', <IcoUndo flip />]] as [string, React.ReactNode][])
            .map(([n, i]) => <QuickButton key={n} aria-label={n}>{i}</QuickButton>)}
          <QuickButton $w={30} aria-label="Customize"><Ico w={12} h={14}><path d="M1 1h10" stroke="#c9d3da" strokeWidth="2" /><path d="M1 7h10l-5 6z" fill="#c9d3da" /></Ico></QuickButton>
        </QuickAccess>
        <WindowTitle>Untitled_0 - CST Studio Suite</WindowTitle>
        <WindowButtons>
          <button aria-label="Minimize"><Ico w={14} h={18}><path d="M1 15h12" stroke="#d5d5d5" strokeWidth="4" /></Ico></button>
          <button aria-label="Restore"><Ico w={18} h={20}><path d="M6 6V2h10v10h-4M2 8h9v10H2zM2 9h9M6 3h10" stroke="#d5d5d5" strokeWidth="2" /></Ico></button>
          <button aria-label="Close"><X s={20} c="#d5d5d5" t={2.4} /></button>
        </WindowButtons>
      </TitleBar>
      <TabBar>
        <RibbonTab $gap>File</RibbonTab><RibbonTab>Home</RibbonTab><RibbonTab>Modeling</RibbonTab><RibbonTab $on>Simulation</RibbonTab><RibbonTab>Post-Processing</RibbonTab><RibbonTab>View</RibbonTab>
        <TabTools>
          <SearchBox><input placeholder="Search (Alt+Q)" aria-label="Search" /><Ico><circle cx="13" cy="12" r="10" stroke="#8e9aa2" strokeWidth="3" /><path d="M20 20l10 10" stroke="#8e9aa2" strokeWidth="5" /></Ico></SearchBox>
          <ToolButton $w={48} aria-label="Collapse ribbon"><Ico w={16} h={12}><path d="M2 10l6-7 6 7" stroke="#cfdbe3" strokeWidth="3" /></Ico></ToolButton>
          <ToolButton $w={42} aria-label="Help"><Ico><circle cx="16" cy="16" r="15" fill="#4c7fd4" stroke="#2d5fb4" /><path d="M11 12c0-7 11-7 11 0 0 4-6 4-6 9" stroke="#fff" strokeWidth="3.4" /><circle cx="16" cy="25" r="2.2" fill="#fff" /></Ico></ToolButton>
          <ToolButton $w={18} aria-label="Help options"><Ico w={10} h={7}><path d="M0 0h10L5 7z" fill="#c9d3da" /></Ico></ToolButton>
        </TabTools>
      </TabBar>
      <Ribbon>
        <Group $w={222}><GroupBody $pad={22}><Smalls><SmallBtn icon={<IcoFreq />} t="Frequency" /><SmallBtn icon={<IcoBg />} t="Background" /><SmallBtn icon={<IcoBound />} t="Boundaries" /></Smalls></GroupBody><h2>Settings</h2></Group>
        <Group $w={708}><GroupBody>
          <BigBtn w={148} icon={<IcoWave />} a="Waveguide" b="Port" /><BigBtn w={104} icon={<IcoDisc />} a="Discrete" b="Port" caret /><BigBtn w={108} icon={<IcoPlane />} a="Plane" b="Wave" /><BigBtn w={126} icon={<IcoLumped />} a="Lumped" b="Element" caret />
          <Smalls $ml={12}><SmallBtn icon={<IcoFieldImp />} t="Field Import" /><SmallBtn icon={<IcoFieldSrc />} t="Field Source" /></Smalls>
        </GroupBody><h2>Sources and Loads</h2></Group>
        <Group $w={258}><GroupBody><BigBtn w={136} icon={<IcoMonitor />} a="Field" b="Monitor" /><BigBtn w={104} icon={<IcoProbe />} a="Field" b="Probe" /></GroupBody><h2>Monitors</h2></Group>
        <Group $w={316}><GroupBody><BigBtn w={116} icon={<IcoSolver />} a="Setup" b="Solver" />
          <Smalls $ml={7}><SmallBtn icon={<IcoOpt />} t="Optimizer" /><SmallBtn icon={<IcoSweep />} t="Par. Sweep" /><SmallBtn icon={<IcoClip />} t="Logfile" caret /></Smalls></GroupBody><h2>Solver</h2></Group>
        <Group $w={312}><GroupBody><BigBtn w={90} icon={<IcoPicks />} a="Picks" caret live cc="#12466e" />
          <Smalls $ml={8}><SmallBtn icon={<IcoPickPt />} t="Pick Points" caret live /><SmallBtn icon={<IcoPickList />} t="Pick Lists" caret /><SmallBtn icon={<IcoClear />} t="Clear Picks" /></Smalls></GroupBody><h2>Picks</h2></Group>
        <Group $w={269}><GroupBody $pad={10}><BigBtn w={96} icon={<IcoMesh />} a="Mesh" b="View" live on /><BigBtn w={154} icon={<IcoGlobal />} a="Global" b="Properties" caret /></GroupBody><h2>Mesh</h2></Group>
        <Group $w={355}><GroupBody><BigBtn w={158} icon={<IcoInter />} a="Intersection" b="Check" /><BigBtn w={178} icon={<IcoElec />} a="Electrical" b="Connections" caret /></GroupBody><h2>Check</h2></Group>
      </Ribbon>

      <Main>
        <LeftDock>
          <Head t="Workspace" />
          <WorkspaceBox>
            <ul>
              <WsRow $lvl={0}><button type="button" aria-label="Collapse workspace"><Chev c="#222" /></button><Sigma />Workspace</WsRow>
              <WsRow $lvl={1}><Cst />microstrip antenna.cst</WsRow>
              <WsRow $lvl={1}><Cst />C_matesurface_7.cst</WsRow>
              <WsRow $lvl={1} $bold><Cst />Untitled_0</WsRow>
            </ul>
            <ScrollBar>
              <ScrollPart aria-label="Scroll up"><Ico w={18} h={10}><path d="M0 10L9 0l9 10z" fill="#777" /></Ico></ScrollPart>
              <ScrollPart $thumb aria-label="Scroll thumb" />
              <ScrollPart aria-label="Scroll down"><Ico w={18} h={10}><path d="M0 0h18L9 10z" fill="#777" /></Ico></ScrollPart>
            </ScrollBar>
          </WorkspaceBox>
          <Splitter />
          <Head t="Navigation Tree" />
          <TreeSearch placeholder="Search" aria-label="Search tree" />
          <Tree>
            {rows.map(([name, guides, icon, exp], i) => (
              <TreeRow key={name}>
                {guides.map((g, j) => (
                  <Guide key={j} $g={g}>
                    {exp && j === guides.length - 1 && (
                      <Expander type="button" aria-label={exp === '+' ? 'Expand' : 'Collapse'}><Ico w={12} h={12}><path d={exp === '+' ? 'M1 6h10M6 1v10' : 'M1 6h10'} stroke="#3a5a9c" strokeWidth="2" /></Ico></Expander>
                    )}
                  </Guide>
                ))}
                <TreeIcon $w={guides.length === 3 ? 60 : 40}>{icon}</TreeIcon>
                <TreeText $on={i === 0}>{name}</TreeText>
              </TreeRow>
            ))}
          </Tree>
        </LeftDock>

        <Center>
          <DocTabs>
            <DocTab><Cst /><span>microstrip antenna</span><TabClose aria-label="Close tab"><X c="#fff" t={4} /></TabClose></DocTab>
            <DocTab><Cst /><span>C_matesurface_7*</span><TabClose aria-label="Close tab"><X c="#fff" t={4} /></TabClose></DocTab>
            <DocTab $on><Cst /><span>Untitled_0*</span><TabClose $red aria-label="Close tab"><X c="#fff" t={4} /></TabClose></DocTab>
          </DocTabs>
          <Viewport>
            <Scene />
            <InfoBox><h3>Boundary</h3><dt>Type</dt><dd>Open (add space)</dd><dt>Position</dt><dd>Zmax</dd></InfoBox>
          </Viewport>
          <BottomTabs $h={34}><BTab $w={200} $on>3D</BTab><BTab $w={200}>Schematic</BTab><TabSep /></BottomTabs>
          <Splitter />
          <BottomDock>
            <Panel>
              <Head t="Result Navigator" />
              <ResultBody>
                <ResultTable>
                  <thead><tr><th scope="col" aria-label="Filter"><Ico w={28} h={30}><path d="M2 2h24L17 14v13l-6-3V14z" fill="url(#gl)" stroke="#8a8a8a" strokeWidth="2" /></Ico></th><th scope="col">3D Run ID</th></tr></thead>
                  <tbody><tr><td><Ico w={24} h={16}><path d="M1 8h8M10 2v12M21 2v12" stroke="#888" strokeWidth="2.4" /><path d="M10 5h11v6H10z" fill="#aaa" stroke="#777" strokeWidth="2" /></Ico></td><td>0: Current Run</td></tr></tbody>
                </ResultTable>
                <Ico w={14} h={9}><path d="M1 1l6 6 6-6" stroke="#888" strokeWidth="2" /></Ico>
              </ResultBody>
              <BottomTabs $h={40}><BTab $w={240} $on>Result Navigator</BTab><BTab $w={216}>Parameter List</BTab><TabSep /></BottomTabs>
            </Panel>
            <Panel $w={858}>
              <Head t="Messages" />
              <MessageTools>
                <button aria-label="Errors"><Ico><circle cx="16" cy="16" r="14" fill="#8f8f8f" /><path d="M10 10l12 12M22 10L10 22" stroke="#fff" strokeWidth="5" /></Ico></button>
                <button aria-label="Warnings"><Ico><path d="M16 4l13 24H3z" fill="#dcdcdc" stroke="#a0a0a0" strokeWidth="2" /><path d="M16 11v9M16 22v4" stroke="#777" strokeWidth="3" /></Ico></button>
                <button aria-label="Information"><Ico><path d="M16 2c18 0 18 25 4 25l-1 4-5-4C-2 26-1 2 16 2z" fill="#fafafa" stroke="#a5a5a5" strokeWidth="2" /><path d="M16 7v4M13 14h4v9M12 23h9" stroke="#666" strokeWidth="3" /></Ico></button>
                <button aria-label="Clear"><Ico><path d="M3 4l12 16M15 4L3 20" stroke="#999" strokeWidth="4" /><path d="M18 6h12M18 15h12M5 24h25" stroke="#6a6a6a" strokeWidth="4" /></Ico></button>
              </MessageTools>
              <MessageList />
              <BottomTabs $h={40}><TabSep /><BTab $w={142}>Progress</BTab><BTab $w={144} $on>Messages</BTab></BottomTabs>
            </Panel>
          </BottomDock>
        </Center>
      </Main>

      <Status>
        Ready
        <StatusIcons>
          <StatusButton aria-label="Zoom"><Lens k="plus" /></StatusButton><StatusButton $on aria-label="Pan"><Pan /></StatusButton><StatusButton aria-label="Rotate"><Rot /></StatusButton><StatusButton aria-label="Dynamic zoom"><Lens k="ud" /></StatusButton><StatusButton aria-label="Reset view"><Reset /></StatusButton>
          <ThinSep /><StatusButton aria-label="Fit"><Fit /></StatusButton><StatusButton aria-label="Cutting plane"><Cut /></StatusButton><StatusButton $w={66} aria-label="View options"><Box3 /><CaretMark $c="#888" /></StatusButton>
          <ThinSep /><StatusButton aria-label="Properties"><Prop /></StatusButton>
        </StatusIcons>
        <StatusText>Raster=10.000</StatusText><StatusText>Tetrahedrons</StatusText><StatusText $blue>Normal</StatusText><StatusText><span>mm</span><span>GHz</span><span>ns</span><span>K</span></StatusText>
      </Status>
      <Taskbar><i /></Taskbar>
      <Watermark>CSDN @木棉.</Watermark>

      <Dialog aria-label="Boundary Conditions">
        <DialogHead><h2>Boundary Conditions</h2><button type="button" aria-label="Close dialog"><X s={24} c="#8a8a8a" t={1.4} /></button></DialogHead>
        <DialogTabs><DialogTab type="button" $on>Boundaries</DialogTab><DialogTab type="button">Symmetry Planes</DialogTab></DialogTabs>
        <DialogPane>
          <CheckLabel><Check type="checkbox" defaultChecked />Apply in all directions</CheckLabel>
          <Fields>
            <Drop id="type" label="Type:" /><Drop id="xmax" label="Xmax:" off right />
            <Drop id="ymin" label="Ymin:" off /><Drop id="ymax" label="Ymax:" off right />
            <Drop id="zmin" label="Zmin:" off /><Drop id="zmax" label="Zmax:" off right />
            <CondLabel htmlFor="cond" $off>Cond.:</CondLabel><CondInput id="cond" defaultValue="1000" disabled /><CondLabel as="span" $off $right>S/m</CondLabel><DlgButton type="button" $w={276} $drop>Open Boundary...</DlgButton>
          </Fields>
        </DialogPane>
        <DialogFoot><DlgButton type="button" $w={148}>确定</DlgButton><DlgButton type="button" $w={150}>Cancel</DlgButton><DlgButton type="button" $w={148}>Help</DlgButton></DialogFoot>
      </Dialog>
    </Shell>
  );
}
